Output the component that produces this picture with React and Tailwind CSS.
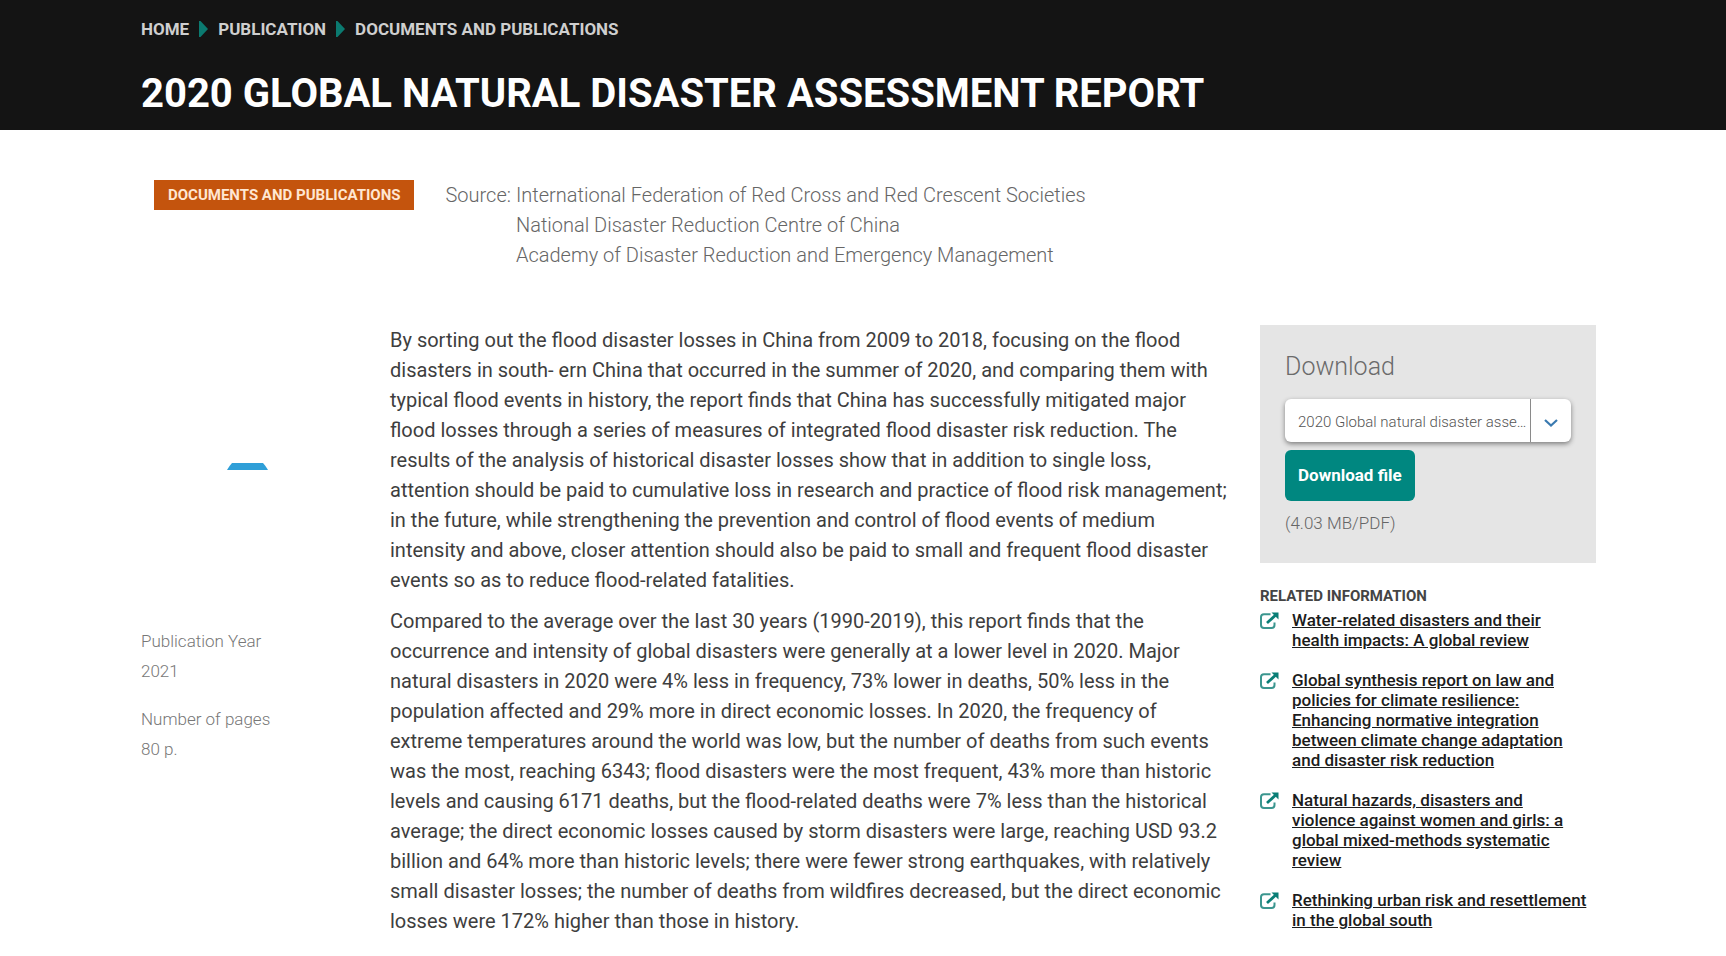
const sources = [
  "International Federation of Red Cross and Red Crescent Societies",
  "National Disaster Reduction Centre of China",
  "Academy of Disaster Reduction and Emergency Management",
];

const related = [
  "Water-related disasters and their health impacts: A global review",
  "Global synthesis report on law and policies for climate resilience: Enhancing normative integration between climate change adaptation and disaster risk reduction",
  "Natural hazards, disasters and violence against women and girls: a global mixed-methods systematic review",
  "Rethinking urban risk and resettlement in the global south",
];

const facts = [
  { label: "Publication Year", value: "2021" },
  { label: "Number of pages", value: "80 p." },
];

function CrumbArrow() {
  return (
    <svg viewBox="0 0 9 16" className="h-4 w-[9px] fill-[#0b7a70]" aria-hidden="true">
      <path d="M0 0 H1.5 L9 8 L1.5 16 H0 Z" />
    </svg>
  );
}

function ExternalLinkIcon() {
  return (
    <svg viewBox="0 0 19 17" className="mt-[2px] h-[17px] w-[19px] shrink-0" fill="none" aria-hidden="true">
      <path
        d="M10.5 2.2 H4 Q1 2.2 1 5 V13 Q1 16 4 16 H11.5 Q14.5 16 14.5 13 V10.5"
        stroke="#3b968f"
        strokeWidth="2"
      />
      <path d="M7 11 L15.5 3.2" stroke="#0b7f77" strokeWidth="2.8" />
      <path d="M11.5 0.5 H18.5 V7.5 Z" fill="#0b7f77" />
    </svg>
  );
}

function Header() {
  return (
    <header className="bg-[#141414] pt-[18px] pr-[130px] pb-[7px] pl-[141px]">
      <nav aria-label="Breadcrumb">
        <ol className="flex items-center gap-[10px] text-[17px] leading-[22px] font-bold text-[#cfcfcf]">
          <li><a href="#home">HOME</a></li>
          <li><CrumbArrow /></li>
          <li><a href="#publication">PUBLICATION</a></li>
          <li><CrumbArrow /></li>
          <li><a href="#documents">DOCUMENTS AND PUBLICATIONS</a></li>
        </ol>
      </nav>
      <h1 className="mt-6 text-[40px] leading-[59px] font-bold text-white">
        2020 GLOBAL NATURAL DISASTER ASSESSMENT REPORT
      </h1>
    </header>
  );
}

function DownloadCard() {
  return (
    <section className="bg-[#e5e5e5] px-[25px] pt-[27px] pb-[25px]">
      <h2 className="text-[25px] leading-[30px] font-light text-[#6b6b6b]">
        <label htmlFor="file">Download</label>
      </h2>
      <div className="relative mt-[17px] flex h-[43px] rounded-md bg-white shadow-[0_2px_5px_rgba(0,0,0,0.45)]">
        <select
          id="file"
          className="w-full appearance-none truncate rounded-md bg-transparent pt-[3px] pr-[42px] pl-[13px] text-[15px] font-light text-[#555]"
        >
          <option>2020 Global natural disaster assessment report</option>
        </select>
        <span className="pointer-events-none absolute inset-y-0 right-0 flex w-[41px] items-center justify-center border-l border-[#8a8a8a]">
          <svg viewBox="0 0 14 8" className="mt-1 h-2 w-[14px]" fill="none" stroke="#3a7ab0" strokeWidth="2.2" aria-hidden="true">
            <path d="M1 1 L7 6.5 L13 1" />
          </svg>
        </span>
      </div>
      <button
        type="button"
        className="mt-2 h-[51px] rounded-md bg-[#008780] px-[13px] text-[17px] font-bold text-white"
      >
        Download file
      </button>
      <p className="mt-[7px] text-[17px] leading-[30px] font-light text-[#666]">(4.03 MB/PDF)</p>
    </section>
  );
}

function Related() {
  return (
    <section className="mt-[23px]">
      <h2 className="text-[15px] leading-[20px] font-bold text-[#444]">RELATED INFORMATION</h2>
      <ul className="mt-1 flex flex-col gap-5 pr-2">
        {related.map((title) => (
          <li key={title} className="flex gap-[13px]">
            <ExternalLinkIcon />
            <a href="#related" className="text-[17px] leading-[20px] font-medium text-[#1c1c1c] underline">
              {title}
            </a>
          </li>
        ))}
      </ul>
    </section>
  );
}

export default function App() {
  return (
    <div className="bg-white font-['Roboto',sans-serif]">
      <Header />
      <div className="flex items-start pt-[50px] pr-[130px] pl-[154px]">
        <span className="shrink-0 bg-[#c4540d] px-[14px] text-[15px] leading-[30px] font-bold text-[#ffe6d2]">
          DOCUMENTS AND PUBLICATIONS
        </span>
        <dl className="ml-[31px] flex gap-[5px] text-[20px] leading-[30px] font-light text-[#666]">
          <dt>Source:</dt>
          <dd>
            <ul>
              {sources.map((name) => (
                <li key={name}>{name}</li>
              ))}
            </ul>
          </dd>
        </dl>
      </div>
      <div className="grid grid-cols-[249px_1fr_336px] pt-[55px] pr-[130px] pb-5 pl-[141px]">
        <aside className="pt-[138px]">
          <svg viewBox="0 0 41 7" className="ml-[86px] h-[7px] w-[41px] fill-[#2f9fd8]" aria-hidden="true">
            <path d="M5 0 H36 Q38 2 41 7 H0 Q3 2 5 0 Z" />
          </svg>
          <dl className="mt-[156px] flex flex-col gap-[18px] text-[17px] leading-[30px] font-light text-[#777]">
            {facts.map((fact) => (
              <div key={fact.label}>
                <dt>{fact.label}</dt>
                <dd>{fact.value}</dd>
              </div>
            ))}
          </dl>
        </aside>
        <main className="flex flex-col gap-[11px] pr-8 text-[20px] leading-[30px] text-[#3e3e3e]">
          <p>
            By sorting out the flood disaster losses in China from 2009 to 2018, focusing on the flood disasters in
            south- ern China that occurred in the summer of 2020, and comparing them with typical flood events in
            history, the report finds that China has successfully mitigated major flood losses through a series of
            measures of integrated flood disaster risk reduction. The results of the analysis of historical disaster
            losses show that in addition to single loss, attention should be paid to cumulative loss in research and
            practice of flood risk management; in the future, while strengthening the prevention and control of flood
            events of medium intensity and above, closer attention should also be paid to small and frequent flood
            disaster events so as to reduce flood-related fatalities.
          </p>
          <p>
            Compared to the average over the last 30 years (1990-2019), this report finds that the occurrence and
            intensity of global disasters were generally at a lower level in 2020. Major natural disasters in 2020
            were 4% less in frequency, 73% lower in deaths, 50% less in the population affected and 29% more in direct
            economic losses. In 2020, the frequency of extreme temperatures around the world was low, but the number
            of deaths from such events was the most, reaching 6343; flood disasters were the most frequent, 43% more
            than historic levels and causing 6171 deaths, but the flood-related deaths were 7% less than the
            historical average; the direct economic losses caused by storm disasters were large, reaching USD 93.2
            billion and 64% more than historic levels; there were fewer strong earthquakes, with relatively small
            disaster losses; the number of deaths from wildfires decreased, but the direct economic losses were 172%
            higher than those in history.
          </p>
        </main>
        <aside>
          <DownloadCard />
          <Related />
        </aside>
      </div>
    </div>
  );
}
